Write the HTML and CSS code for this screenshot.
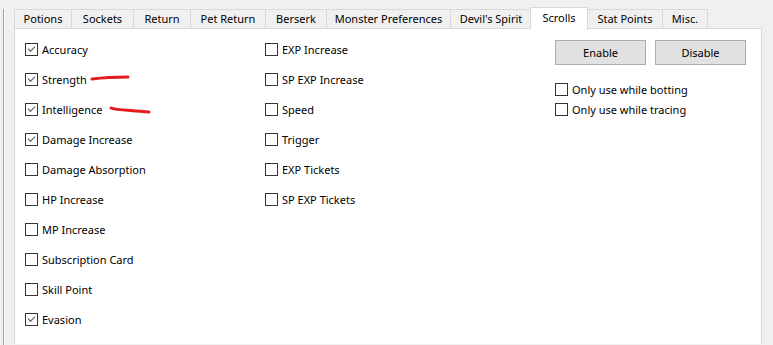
FILE: index.html
```html
<!DOCTYPE html>
<html lang="en">
<head>
    <meta charset="UTF-8">
    <title>Scrolls</title>
    <link rel="stylesheet" href="styles.css">
</head>
<body>
    <div class="frame">
        <div class="tabs">
            <div class="tab w58">Potions</div>
            <div class="tab w63">Sockets</div>
            <div class="tab w58">Return</div>
            <div class="tab w76">Pet Return</div>
            <div class="tab w62">Berserk</div>
            <div class="tab w125">Monster Preferences</div>
            <div class="tab w82">Devil's Spirit</div>
            <div class="tab active">Scrolls</div>
            <div class="tab w76">Stat Points</div>
            <div class="tab w46">Misc.</div>
        </div>
        <div class="panel">
            <div class="col col-left">
                <label class="row"><span class="box checked"></span>Accuracy</label>
                <label class="row marked"><span class="box checked"></span>Strength
                    <svg class="mark mark-str" width="42" height="8" viewBox="0 0 42 8"><path d="M2 5 C10 4 24 3 38 3" /></svg>
                </label>
                <label class="row marked"><span class="box checked"></span>Intelligence
                    <svg class="mark mark-int" width="44" height="10" viewBox="0 0 44 10"><path d="M2 2 C6 4 18 4 40 6" /></svg>
                </label>
                <label class="row"><span class="box checked"></span>Damage Increase</label>
                <label class="row"><span class="box"></span>Damage Absorption</label>
                <label class="row"><span class="box"></span>HP Increase</label>
                <label class="row"><span class="box"></span>MP Increase</label>
                <label class="row"><span class="box"></span>Subscription Card</label>
                <label class="row"><span class="box"></span>Skill Point</label>
                <label class="row"><span class="box checked"></span>Evasion</label>
            </div>
            <div class="col col-mid">
                <label class="row"><span class="box"></span>EXP Increase</label>
                <label class="row"><span class="box"></span>SP EXP Increase</label>
                <label class="row"><span class="box"></span>Speed</label>
                <label class="row"><span class="box"></span>Trigger</label>
                <label class="row"><span class="box"></span>EXP Tickets</label>
                <label class="row"><span class="box"></span>SP EXP Tickets</label>
            </div>
            <div class="col col-right">
                <div class="buttons">
                    <button class="btn">Enable</button>
                    <button class="btn">Disable</button>
                </div>
                <label class="row small"><span class="box"></span>Only use while botting</label>
                <label class="row small"><span class="box"></span>Only use while tracing</label>
            </div>
        </div>
    </div>
</body>
</html>
```

FILE: styles.css
```css
body {
    margin: 0;
    background-color: #f0f0f0;
    font-family: "Noto Sans", "Liberation Sans", sans-serif;
    font-size: 11px;
    color: #000;
    height: 345px;
    overflow: hidden;
}

.frame {
    margin-left: 3px;
    padding-left: 10px;
    border-left: 1px solid #a0a0a0;
    box-shadow: inset 1px 0 0 #fff;
    margin-top: 9px;
    height: 336px;
}

.tabs {
    display: flex;
    height: 19px;
    padding-left: 1px;
}

.tab {
    box-sizing: border-box;
    height: 19px;
    line-height: 18px;
    background-color: #f0f0f0;
    border: 1px solid #d9d9d9;
    border-bottom: none;
    margin-left: -1px;
    text-align: center;
    flex: none;
}

.w46 { width: 46px; }
.w58 { width: 58px; }
.w62 { width: 62px; }
.w63 { width: 63px; }
.w76 { width: 76px; }
.w82 { width: 82px; }
.w125 { width: 125px; }

.tab.active {
    width: 58px;
    background-color: #fff;
    height: 23px;
    margin-top: -2px;
    margin-left: -2px;
    position: relative;
    z-index: 1;
    line-height: 19px;
}

.panel {
    width: 746px;
    height: 310px;
    background-color: #fff;
    border: 1px solid #d9d9d9;
    border-bottom: none;
    display: flex;
    padding-top: 5px;
}

.col {
    display: flex;
    flex-direction: column;
}

.col-left {
    width: 240px;
    padding-left: 10px;
}

.col-mid {
    width: 290px;
}

.row {
    display: flex;
    align-items: center;
    height: 30px;
    gap: 4px;
    position: relative;
}

.row.small {
    height: 20px;
}

.box {
    width: 11px;
    height: 11px;
    border: 1px solid #333;
    background-color: #fff;
    position: relative;
    flex: none;
}

.box.checked::after {
    content: "";
    position: absolute;
    left: 2px;
    top: 0px;
    width: 6px;
    height: 3px;
    border-left: 1.5px solid #555;
    border-bottom: 1.5px solid #555;
    transform: translate(0, 2px) rotate(-45deg);
}

.buttons {
    display: flex;
    gap: 9px;
    margin-top: 6px;
    margin-bottom: 14px;
}

.btn {
    width: 91px;
    height: 25px;
    background-color: #e1e1e1;
    border: 1px solid #adadad;
    font-family: inherit;
    font-size: 11px;
    color: #000;
    padding: 0;
}

.mark {
    position: absolute;
    fill: none;
    stroke: #e31b1b;
    stroke-width: 3;
    stroke-linecap: round;
}

.mark-str {
    left: 65px;
    top: 10px;
}

.mark-int {
    left: 84px;
    top: 12px;
}
```
